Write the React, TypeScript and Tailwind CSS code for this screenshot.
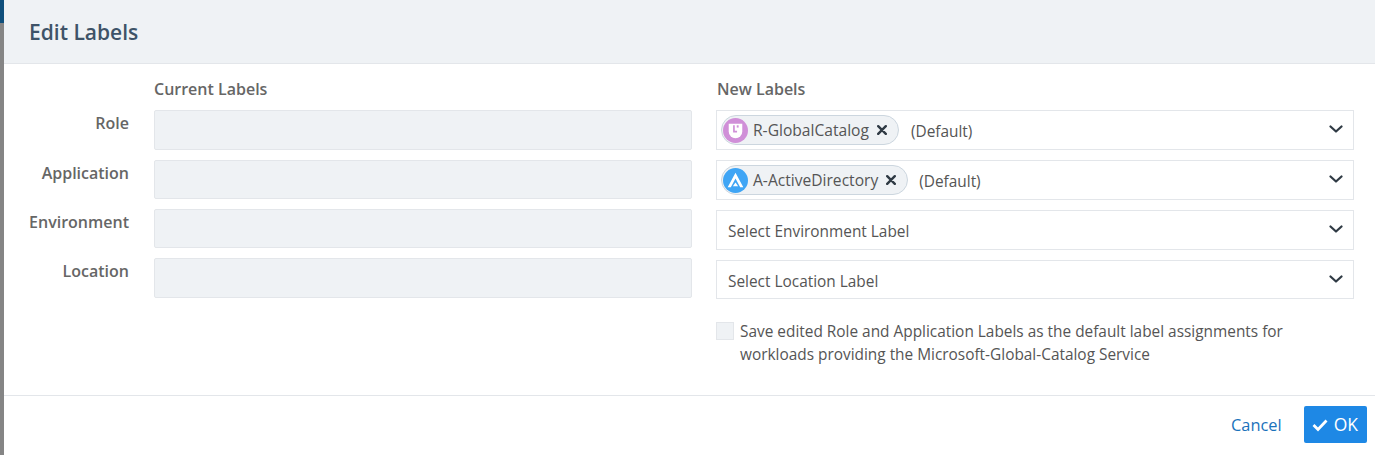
import React from "react";

const Chevron = () => (
  <svg width="14" height="14" viewBox="0 0 14 14" className="shrink-0 mb-[2px]" fill="none" stroke="#2f3a44" strokeWidth="2.2" strokeLinecap="round" strokeLinejoin="round">
    <path d="M1.5 4.5 L7 9.5 L12.5 4.5" />
  </svg>
);

const Close = () => (
  <svg width="10" height="10" viewBox="0 0 10 10" className="shrink-0" fill="none" stroke="#2f3a44" strokeWidth="2.4" strokeLinecap="round">
    <path d="M1.2 1.2 L8.8 8.8 M8.8 1.2 L1.2 8.8" />
  </svg>
);

const RoleIcon = () => (
  <svg width="25" height="25" viewBox="0 0 24 24" className="shrink-0">
    <circle cx="12" cy="12" r="12" fill="#d08fd8" />
    <path d="M5.5 5.5 H18.5 V13 A6.5 6.5 0 0 1 5.5 13 Z" fill="#fff" />
    <path d="M10.5 7 V13 H13.5" fill="none" stroke="#d08fd8" strokeWidth="1.6" />
    <rect x="13.2" y="7" width="1.8" height="2.2" fill="#d08fd8" />
  </svg>
);

const AppIcon = () => (
  <svg width="25" height="25" viewBox="0 0 24 24" className="shrink-0">
    <circle cx="12" cy="12" r="12" fill="#3fa5f5" />
    <path d="M12 4.5 L19.5 18.5 L16.5 18.5 L12 10 L7.5 18.5 L4.5 18.5 Z" fill="#fff" />
    <path d="M12 14 L14.5 17.5 H9.5 Z" fill="#fff" />
  </svg>
);

const Pill = ({ icon, text }: { icon: React.ReactNode; text: string }) => (
  <div className="flex items-center h-[30px] rounded-full border border-[#ccd6df] bg-[#eff2f5] pl-[1px] pr-[11px]">
    {icon}
    <span className="ml-[5px] mr-[8px] mt-[2px] text-[15.6px] text-[#555]">{text}</span>
    <Close />
  </div>
);

const SelectBox = ({ h, children }: { h: string; children: React.ReactNode }) => (
  <div className={`flex items-center justify-between border border-[#e3e6ea] pl-[4px] pr-[10px] ${h}`}>
    <div className="flex items-center">{children}</div>
    <Chevron />
  </div>
);

export default function App() {
  return (
    <div className="flex w-[1375px] h-[455px] overflow-hidden bg-white" style={{ fontFamily: '"Open Sans", sans-serif' }}>
      <div className="w-[4px] shrink-0 bg-[#858585] flex flex-col">
        <div className="h-[23px] bg-[#0f4f7c]" />
      </div>
      <div className="flex-1 flex flex-col">
        <div className="h-[64px] shrink-0 flex items-center pl-[25px] bg-[#eff2f5] border-b border-[#e3e6ea]">
          <h1 className="mt-[2px] text-[21px] font-semibold text-[#3e5368]">Edit Labels</h1>
        </div>
        <div className="h-[331px] shrink-0 flex pt-[14px]">
          <div className="w-[125px] shrink-0 flex flex-col items-end pt-[33px] text-[16px] font-semibold text-[#666] leading-[24px]">
            <div className="h-[50px]">Role</div>
            <div className="h-[49px]">Application</div>
            <div className="h-[49px]">Environment</div>
            <div>Location</div>
          </div>
          <div className="w-[538px] ml-[25px] shrink-0 flex flex-col">
            <div className="h-[32px] pt-[1px] text-[16px] font-semibold text-[#666] leading-[20px]">Current Labels</div>
            <div className="h-[40px] rounded-[2px] border border-[#e3e6ea] bg-[#eff2f5]" />
            <div className="h-[39px] mt-[10px] rounded-[2px] border border-[#e3e6ea] bg-[#eff2f5]" />
            <div className="h-[39px] mt-[10px] rounded-[2px] border border-[#e3e6ea] bg-[#eff2f5]" />
            <div className="h-[40px] mt-[10px] rounded-[2px] border border-[#e3e6ea] bg-[#eff2f5]" />
          </div>
          <div className="w-[638px] ml-[24px] shrink-0 flex flex-col">
            <div className="h-[32px] pt-[1px] pl-[1px] text-[16px] font-semibold text-[#666] leading-[20px]">New Labels</div>
            <SelectBox h="h-[40px]">
              <Pill icon={<RoleIcon />} text="R-GlobalCatalog" />
              <span className="ml-[12px] mt-[4px] text-[15.4px] text-[#555]">(Default)</span>
            </SelectBox>
            <div className="mt-[10px]">
              <SelectBox h="h-[40px]">
                <Pill icon={<AppIcon />} text="A-ActiveDirectory" />
                <span className="ml-[11px] mt-[4px] text-[15.4px] text-[#555]">(Default)</span>
              </SelectBox>
            </div>
            <div className="mt-[10px]">
              <SelectBox h="h-[40px]">
                <span className="ml-[7px] mt-[4px] text-[15.4px] text-[#555]">Select Environment Label</span>
              </SelectBox>
            </div>
            <div className="mt-[10px]">
              <SelectBox h="h-[39px]">
                <span className="ml-[7px] mt-[4px] text-[15.4px] text-[#555]">Select Location Label</span>
              </SelectBox>
            </div>
            <div className="flex mt-[22px]">
              <div className="w-[18px] h-[18px] mt-[1px] shrink-0 border border-[#e3e6ea] bg-[#eff2f5]" />
              <p className="ml-[6px] text-[15.4px] leading-[23px] text-[#555] -mt-[1px] whitespace-nowrap">
                Save edited Role and Application Labels as the default label assignments for
                <br />
                workloads providing the Microsoft-Global-Catalog Service
              </p>
            </div>
          </div>
        </div>
        <div className="flex-1 flex items-center justify-end border-t border-[#e3e6ea] pr-[8px]">
          <a className="text-[16.4px] text-[#1a72bb] mr-[22px]">Cancel</a>
          <button className="flex items-center h-[37px] pl-[8px] pr-[9px] rounded-[2px] bg-[#1e88e5] text-white text-[17.5px] mt-[-2px]">
            <svg width="16" height="14" viewBox="0 0 16 14" fill="none" stroke="#fff" strokeWidth="2.8" className="mr-[6px]">
              <path d="M1.5 7 L6 11.5 L14.5 2.5" />
            </svg>
            OK
          </button>
        </div>
      </div>
    </div>
  );
}
